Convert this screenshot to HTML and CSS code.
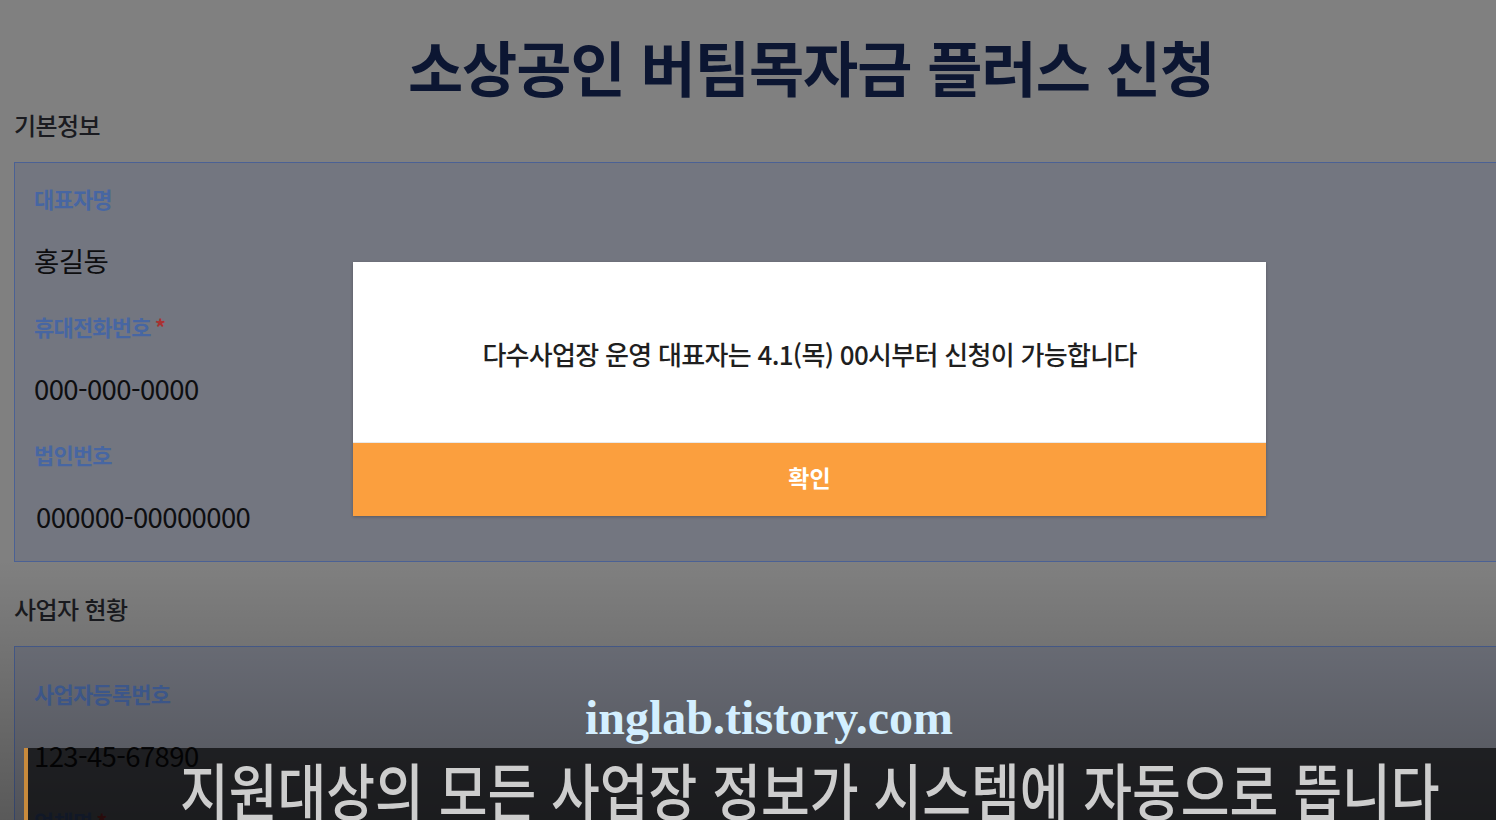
FILE: index.html
```html
<!DOCTYPE html>
<html lang="ko">
<head>
    <meta charset="UTF-8">
    <meta name="viewport" content="width=device-width, initial-scale=1.0">
    <title>소상공인 버팀목자금 플러스 신청</title>
    <link rel="stylesheet" href="styles.css">
</head>
<body>
    <div class="page">
        <h1 class="title">소상공인 버팀목자금 플러스 신청</h1>

        <h2 class="section-title">기본정보</h2>
        <div class="panel">
            <div class="field">
                <div class="field-label">대표자명</div>
                <div class="field-value">홍길동</div>
            </div>
            <div class="field">
                <div class="field-label">휴대전화번호<span class="req">*</span></div>
                <div class="field-value">000-000-0000</div>
            </div>
            <div class="field">
                <div class="field-label">법인번호</div>
                <div class="field-value corp">000000-00000000</div>
            </div>
        </div>

        <h2 class="section-title">사업자 현황</h2>
        <div class="panel panel-biz">
            <div class="field">
                <div class="field-label">사업자등록번호</div>
                <div class="field-value">123-45-67890</div>
            </div>
            <div class="field">
                <div class="field-label">업체명<span class="req">*</span></div>
            </div>
        </div>
    </div>

    <div class="shade"></div>

    <div class="modal">
        <div class="modal-body">다수사업장 운영 대표자는 4.1(목) 00시부터 신청이 가능합니다</div>
        <button class="modal-btn">확인</button>
    </div>

    <div class="watermark">inglab.tistory.com</div>
    <div class="caption"><span class="caption-text">지원대상의 모든 사업장 정보가 시스템에 자동으로 뜹니다</span></div>
</body>
</html>
```

FILE: styles.css
```css
body {
    margin: 0;
    height: 820px;
    overflow: hidden;
    background: #808080;
    font-family: "Noto Sans CJK KR", "Noto Sans", sans-serif;
    color: #111;
}
.page {
    width: 1608px;
    padding-left: 14px;
    box-sizing: border-box;
}
.title {
    margin: 0;
    padding-top: 30px;
    font-size: 60px;
    line-height: 72px;
    font-weight: 700;
    letter-spacing: -1px;
    text-align: center;
    color: #0c1632;
}
.section-title {
    margin: 7px 0 21px 0;
    font-size: 24px;
    line-height: 32px;
    font-weight: 500;
    letter-spacing: -0.6px;
    color: #1a1b20;
}
.panel {
    background: #737680;
    border: 1px solid #4b6194;
    height: 400px;
    box-sizing: border-box;
    padding: 21px 19px 0;
    margin-bottom: 31px;
}
.panel-biz {
    padding-top: 32px;
}
.field {
    margin-bottom: 34px;
}
.field-label {
    font-size: 22px;
    line-height: 28px;
    font-weight: 700;
    letter-spacing: -0.8px;
    color: #4766a2;
    margin-bottom: 30px;
}
.req {
    color: #a83232;
    margin-left: 4px;
}
.field-value {
    font-size: 27.5px;
    line-height: 36px;
    letter-spacing: -0.6px;
    color: #0e0e10;
}
.field-value.corp {
    margin-left: 2px;
}
.shade {
    position: absolute;
    left: 0;
    right: 0;
    top: 560px;
    bottom: 0;
    background: linear-gradient(rgba(0,0,0,0), rgba(0,0,0,0.3));
}
.modal {
    position: absolute;
    left: 353px;
    top: 262px;
    width: 913px;
    background: white;
    box-shadow: 0 1px 3px rgba(0,0,0,0.25);
    display: flex;
    flex-direction: column;
}
.modal-body {
    height: 180px;
    display: flex;
    align-items: center;
    justify-content: center;
    font-size: 26px;
    font-weight: 500;
    letter-spacing: -0.7px;
    color: #1f1f1f;
    padding-top: 2px;
    box-sizing: border-box;
}
.modal-btn {
    height: 74px;
    border: none;
    border-top: 1px solid #e9e9e9;
    background: #fb9f3e;
    color: white;
    font-family: inherit;
    font-size: 23px;
    font-weight: 700;
    padding: 0 0 6px;
    cursor: pointer;
}
.watermark {
    position: absolute;
    left: 585px;
    top: 691px;
    font-family: "Liberation Serif", serif;
    font-size: 48px;
    line-height: 54px;
    font-weight: 700;
    color: #d3efff;
}
.caption {
    position: absolute;
    left: 24px;
    right: 0;
    top: 748px;
    bottom: 0;
    background: rgba(0,0,0,0.66);
    border-left: 4px solid #c88a3c;
    padding: 10px 0 0 152px;
    white-space: nowrap;
}
.caption-text {
    display: inline-block;
    font-size: 62px;
    line-height: 62px;
    font-weight: 500;
    color: #cdcdcd;
    transform: scaleX(0.855);
    transform-origin: left top;
}
```
